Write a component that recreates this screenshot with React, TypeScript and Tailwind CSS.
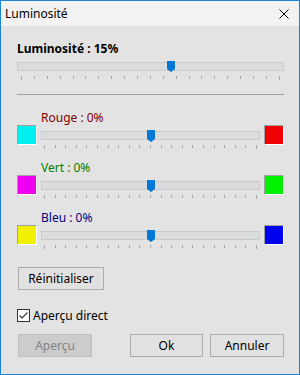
import React from "react";

const font = { fontFamily: '"Noto Sans", "Open Sans", sans-serif' };

const Thumb = ({ h = 11 }: { h?: number }) => (
  <svg width="8" height={h} viewBox={`0 0 8 ${h}`} className="block">
    <path d={`M0 0 H8 V${h - 3} L4 ${h} L0 ${h - 3} Z`} fill="#0078d7" />
  </svg>
);

const Ticks = ({ count }: { count: number }) => (
  <div className="flex justify-between">
    {Array.from({ length: count }).map((_, i) => (
      <div
        key={i}
        className={`w-px bg-[#a9a9a9] ${i === 0 || i === count - 1 ? "h-[4px]" : "h-[3px]"}`}
      />
    ))}
  </div>
);

const Slider = ({
  value,
  thumbH,
  tickInset,
  className = "",
}: {
  value: number;
  thumbH: number;
  tickInset: string;
  className?: string;
}) => (
  <div className={`relative ${className}`}>
    <div className="mt-px h-[9px] border border-[#cacaca] bg-[#dadcdd]" />
    <div className={`mt-[5px] ${tickInset}`}>
      <Ticks count={21} />
    </div>
    <div
      className="absolute top-0 -translate-x-1/2"
      style={{ left: `${value * 100}%` }}
    >
      <Thumb h={thumbH} />
    </div>
  </div>
);

const Swatch = ({ color }: { color: string }) => (
  <div
    className={`h-[20px] w-[20px] shrink-0 border border-t-[#a0a0a0] border-l-[#a0a0a0] border-r-white border-b-white ${color}`}
  />
);

const ColorRow = ({
  label,
  labelColor,
  left,
  right,
}: {
  label: string;
  labelColor: string;
  left: string;
  right: string;
}) => (
  <div className="flex h-[35px] flex-col">
    <div className={`ml-[24px] h-[15px] text-[12px] leading-[15px] ${labelColor}`}>
      {label}
    </div>
    <div className="flex items-start gap-[4px]">
      <Swatch color={left} />
      <div className="flex flex-1 pt-[5px]">
        <Slider value={0.5} thumbH={12} tickInset="px-[3px]" className="flex-1" />
      </div>
      <Swatch color={right} />
    </div>
  </div>
);

const Button = ({
  children,
  width,
  disabled,
}: {
  children: React.ReactNode;
  width: string;
  disabled?: boolean;
}) => (
  <div
    className={`flex h-[23px] items-center justify-center border text-[12px] ${width} ${
      disabled
        ? "border-[#bfbfbf] bg-[#cccccc] text-[#838383]"
        : "border-[#adadad] bg-[#e1e1e1] text-black"
    }`}
  >
    {children}
  </div>
);

export default function App() {
  return (
    <div
      className="flex h-[375px] w-[300px] flex-col border border-[#1883d7] bg-[#e3e3e3] text-black"
      style={font}
    >
      <div className="flex h-[25px] shrink-0 items-center justify-between bg-[#f2f2f2] pl-[4px] pr-[10px]">
        <span className="text-[12px]">Luminosité</span>
        <svg width="10" height="10" viewBox="0 0 10 10">
          <path d="M0.5 0.5 L9.5 9.5 M9.5 0.5 L0.5 9.5" stroke="#000" strokeWidth="1" />
        </svg>
      </div>

      <div className="flex flex-1 flex-col pl-[16px] pr-[15px]">
        <div className="mt-[15px] h-[20px] text-[12px] font-bold leading-[16px]">
          Luminosité : 15%
        </div>
        <Slider value={0.575} thumbH={11} tickInset="px-[4px]" />

        <div className="mt-[14px] h-px bg-[#a0a0a0]" />

        <div className="mt-[15px] flex flex-col gap-[15px]">
          <ColorRow label="Rouge : 0%" labelColor="text-[#800000]" left="bg-[#00f0f0]" right="bg-[#f00000]" />
          <ColorRow label="Vert : 0%" labelColor="text-[#008000]" left="bg-[#f000f0]" right="bg-[#00f000]" />
          <ColorRow label="Bleu : 0%" labelColor="text-[#000080]" left="bg-[#f0f000]" right="bg-[#0000f0]" />
        </div>

        <div className="mt-[22px] pl-px">
          <Button width="w-[86px]">Réinitialiser</Button>
        </div>

        <div className="mt-[19px] flex items-center gap-[3px]">
          <div className="flex h-[13px] w-[13px] items-center justify-center border border-[#333] bg-white">
            <svg width="11" height="11" viewBox="0 0 11 11">
              <path d="M1.5 5.5 L4 8 L9.5 2.5" fill="none" stroke="#333" strokeWidth="1.2" />
            </svg>
          </div>
          <span className="text-[12px] leading-[13px]">Aperçu direct</span>
        </div>

        <div className="mt-[12px] flex pl-px">
          <Button width="w-[74px]" disabled>
            Aperçu
          </Button>
          <div className="ml-auto flex gap-[7px]">
            <Button width="w-[73px]">Ok</Button>
            <Button width="w-[74px]">Annuler</Button>
          </div>
        </div>
      </div>
    </div>
  );
}
